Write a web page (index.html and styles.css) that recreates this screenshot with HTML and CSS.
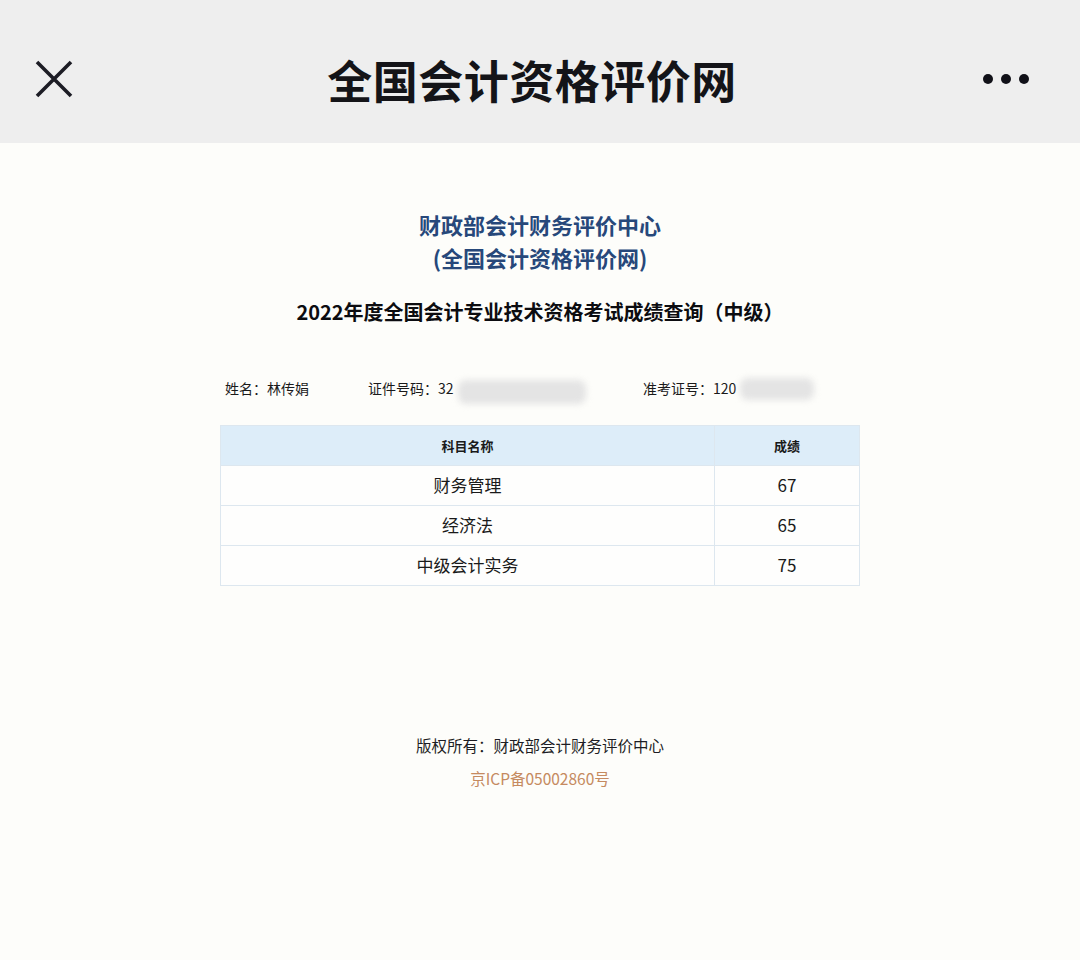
FILE: index.html
```html
<!DOCTYPE html>
<html lang="zh">
<head>
<meta charset="utf-8">
<title>全国会计资格评价网</title>
<link rel="stylesheet" href="styles.css">
</head>
<body>
<header class="topbar">
  <span class="icon-close">
    <svg width="40" height="40" viewBox="0 0 40 40"><path d="M3 3 L37 37 M37 3 L3 37" stroke="#1c1c24" stroke-width="3.6" stroke-linecap="butt"/></svg>
  </span>
  <h1 class="topbar-title">全国会计资格评价网</h1>
  <span class="icon-more">
    <svg width="48" height="12" viewBox="0 0 48 12"><circle cx="6" cy="6" r="5" fill="#111118"/><circle cx="24" cy="6" r="5" fill="#111118"/><circle cx="42" cy="6" r="5" fill="#111118"/></svg>
  </span>
</header>
<main class="page">
  <div class="org">
    <div>财政部会计财务评价中心</div>
    <div>(全国会计资格评价网)</div>
  </div>
  <h2 class="exam-title">2022年度全国会计专业技术资格考试成绩查询（中级）</h2>
  <div class="info">
    <span class="info-item name">姓名：林传娟</span>
    <span class="info-item idno">证件号码：32<span class="blur blur-a"></span></span>
    <span class="info-item ticket">准考证号：120<span class="blur blur-b"></span></span>
  </div>
  <table class="scores">
    <thead>
      <tr><th class="col-subject">科目名称</th><th class="col-score">成绩</th></tr>
    </thead>
    <tbody>
      <tr><td>财务管理</td><td>67</td></tr>
      <tr><td>经济法</td><td>65</td></tr>
      <tr><td>中级会计实务</td><td>75</td></tr>
    </tbody>
  </table>
  <footer class="footer">
    <div class="copyright">版权所有：财政部会计财务评价中心</div>
    <div class="icp">京ICP备05002860号</div>
  </footer>
</main>
</body>
</html>
```

FILE: styles.css
```css
* { box-sizing: border-box; }
html, body { margin: 0; padding: 0; }
body {
  width: 1080px;
  height: 960px;
  background: #fdfdfa;
  font-family: "Noto Sans CJK SC", "Noto Sans", sans-serif;
  color: #111;
  overflow: hidden;
}
.topbar {
  height: 143px;
  background: #eeeeee;
  display: flex;
  align-items: center;
  justify-content: space-between;
  padding: 15px 50px 0 34px;
}
.icon-close { display: flex; width: 40px; height: 40px; }
.icon-more { display: flex; }
.topbar-title {
  margin: 0;
  font-size: 45px;
  font-weight: 700;
  letter-spacing: 0.5px;
  color: #141418;
  margin-left: 8px;
}
.page {
  display: flex;
  flex-direction: column;
  align-items: center;
  padding-top: 65px;
}
.org {
  color: #27487a;
  font-size: 22px;
  font-weight: 700;
  line-height: 33px;
  text-align: center;
}
.exam-title {
  margin: 23px 0 0;
  font-size: 20px;
  font-weight: 700;
  line-height: 30px;
  color: #0c0c10;
}
.info {
  width: 640px;
  margin-top: 46px;
  display: flex;
  align-items: center;
  font-size: 14px;
  color: #1a1a1a;
  height: 30px;
  padding-left: 5px;
}
.info-item { display: inline-flex; align-items: center; }
.name { width: 143px; }
.idno { width: 275px; }
.blur {
  display: inline-block;
  background: #e4e4e4;
  filter: blur(3px);
  border-radius: 8px;
}
.blur-a { width: 128px; height: 24px; margin-left: 4px; margin-top: 8px; }
.blur-b { width: 74px; height: 22px; margin-left: 4px; margin-top: 2px; }
.scores {
  width: 640px;
  margin-top: 22px;
  border-collapse: collapse;
  border: 1px solid #dbe7f0;
}
.scores th, .scores td {
  border: 1px solid #dde7ef;
  text-align: center;
  height: 40px;
  padding: 0;
}
.scores th {
  background: #ddedf9;
  font-size: 13px;
  font-weight: 700;
  color: #1a1a1a;
}
.col-subject { width: 494px; }
.scores td {
  font-size: 17px;
  color: #1a1a1a;
  background: #fefefd;
  padding-bottom: 3px;
}
.footer {
  margin-top: 143px;
  text-align: center;
  font-size: 15.5px;
  line-height: 33px;
}
.copyright { color: #1d1d24; }
.icp { color: #c58a60; }
```
